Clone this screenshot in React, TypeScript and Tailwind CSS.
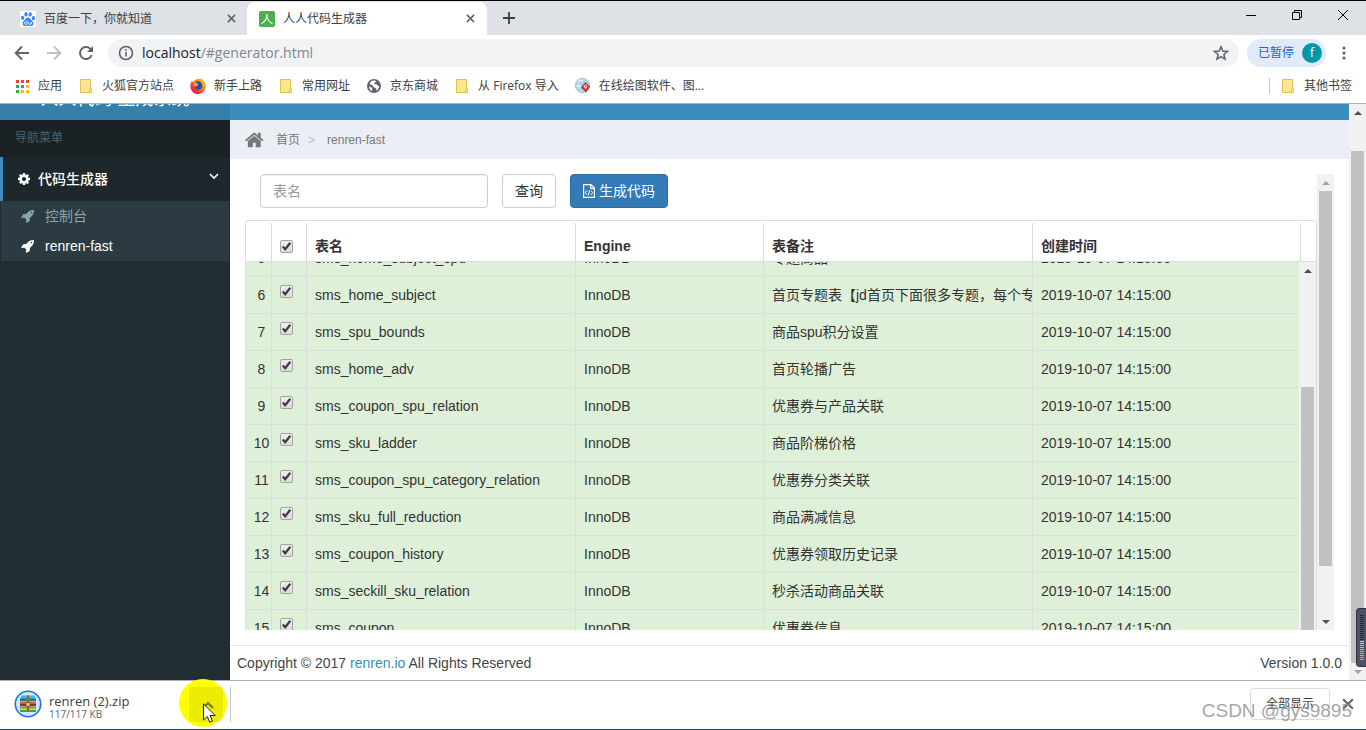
import type { ReactNode } from "react";

const UI_FONT = "font-['Open_Sans','Noto_Sans_CJK_SC',sans-serif]";
const PAGE_FONT = "font-['Liberation_Sans','Noto_Sans_CJK_SC',sans-serif]";

type Row = { id: number; name: string; comment: string };

const rows: Row[] = [
  { id: 5, name: "sms_home_subject_spu", comment: "专题商品" },
  { id: 6, name: "sms_home_subject", comment: "首页专题表【jd首页下面很多专题，每个专题链接新的页面】" },
  { id: 7, name: "sms_spu_bounds", comment: "商品spu积分设置" },
  { id: 8, name: "sms_home_adv", comment: "首页轮播广告" },
  { id: 9, name: "sms_coupon_spu_relation", comment: "优惠券与产品关联" },
  { id: 10, name: "sms_sku_ladder", comment: "商品阶梯价格" },
  { id: 11, name: "sms_coupon_spu_category_relation", comment: "优惠券分类关联" },
  { id: 12, name: "sms_sku_full_reduction", comment: "商品满减信息" },
  { id: 13, name: "sms_coupon_history", comment: "优惠券领取历史记录" },
  { id: 14, name: "sms_seckill_sku_relation", comment: "秒杀活动商品关联" },
  { id: 15, name: "sms_coupon", comment: "优惠券信息" },
];

function CloseIcon({ className }: { className: string }) {
  return (
    <svg viewBox="0 0 10 10" className={className} fill="none" stroke="currentColor" strokeWidth="1.7">
      <path d="M1 1l8 8M9 1l-8 8" />
    </svg>
  );
}

function PawIcon() {
  return (
    <svg viewBox="0 0 16 16" className="size-4 shrink-0">
      <rect width="16" height="16" fill="#fff" />
      <g fill="#3385ff">
        <ellipse cx="6" cy="3.3" rx="1.6" ry="2.3" />
        <ellipse cx="10.2" cy="3.4" rx="1.6" ry="2.2" transform="rotate(10 10.2 3.4)" />
        <ellipse cx="2.7" cy="6.8" rx="1.6" ry="2.1" transform="rotate(-15 2.7 6.8)" />
        <ellipse cx="13.4" cy="7.2" rx="1.6" ry="2.1" />
        <path d="M8 6.6c1.7 0 2.3 1.6 3.4 2.6 1.2 1.1 2.4 2 2.1 3.8-.3 1.7-1.7 2.3-3.2 2-1.5-.3-3-.3-4.5 0-1.6.3-3-.4-3.2-2-.2-1.8.9-2.8 2-3.8C5.7 8.2 6.3 6.6 8 6.6z" />
      </g>
      <path d="M7 9.5v3.8H5.4c-1.5 0-1.5-2.3 0-2.3H7M8.7 11v1.6c0 .8 2.5.9 2.5 0V11v2.4" fill="none" stroke="#fff" strokeWidth=".8" />
    </svg>
  );
}

function RenIcon() {
  return (
    <svg viewBox="0 0 16 16" className="size-4 shrink-0">
      <rect width="16" height="16" rx="2" fill="#4caf50" />
      <path d="M8 3c0 4.5-1.5 7.5-5.5 9.8M8 5.5c.5 3.5 2.2 5.7 5.5 7.3" fill="none" stroke="#fff" strokeWidth="1.2" />
    </svg>
  );
}

function FolderIcon() {
  return (
    <svg viewBox="0 0 12 14" className="h-3.5 w-3 shrink-0">
      <path d="M.5.5h10v9h1v4H.5z" fill="#ffe694" stroke="#e5c04b" />
      <path d="M9.5 13.5V10h1" fill="none" stroke="#e5c04b" />
    </svg>
  );
}

function AppsIcon() {
  const colors = ["#ea4335", "#ea4335", "#ea4335", "#34a853", "#4285f4", "#fbbc05", "#34a853", "#fbbc05", "#fbbc05"];
  return (
    <svg viewBox="0 0 13 13" className="size-[13px] shrink-0">
      {colors.map((c, i) => (
        <rect key={i} x={(i % 3) * 5} y={Math.floor(i / 3) * 5} width="3" height="3" fill={c} />
      ))}
    </svg>
  );
}

function FirefoxIcon() {
  return (
    <svg viewBox="0 0 16 16" className="size-4 shrink-0">
      <defs>
        <linearGradient id="fox" x1="1" y1="0" x2="0.1" y2="1">
          <stop offset="0" stopColor="#ffe226" />
          <stop offset=".45" stopColor="#ff7c18" />
          <stop offset=".8" stopColor="#f4243c" />
          <stop offset="1" stopColor="#e31587" />
        </linearGradient>
      </defs>
      <path d="M2 2.5c.2 1 .6 1.5 1.2 1.7C4 2.5 5.5 1.5 7 1c2 .2 2.5 0 3-.8 3.5 1.3 5.7 4.5 5.7 8A7.7 7.7 0 0 1 .3 8.5C.3 6 1 4.2 2 2.5z" fill="url(#fox)" />
      <path d="M5.5 4.500c1-1.300 3.500-1.600 4.800-.4 1.600 1.200 2.200 3 1.600 4.900-.6 2-2.400 2.900-4.200 2.600-1.800-.3-3-1.600-3.100-3.100 1 .7 2 .6 3.300-.3-1.500-.3-2.800-1.600-2.400-3.700z" fill="#1d4fb8" />
      <path d="M4.300 4.500c1.200-.3 2.200.2 2.700 1 1 .1 1.500.4 1.400.9-.7.8-1.800.8-2 1.700-.9.4-1.800.1-2.400-.9z" fill="#ffb02e" />
    </svg>
  );
}

function GlobeIcon() {
  return (
    <svg viewBox="0 0 14 14" className="size-3.5 shrink-0">
      <circle cx="7" cy="7" r="7" fill="#5f6368" />
      <path d="M5.200 1.800c1.300-.6 3-.5 4.200.2L7.800 3.800c-.8.3-.8 1.200.1 1.400l2 .3c.7.3.6 1.200 1.300 1.600l1 .1c-.1 2-1.300 3.800-3 4.600.5-1.500.2-2.400-1-2.800-1.200-.3-2-.9-2.400-1.900l-.8-1.300-2.300-.6C3 3.700 4 2.400 5.200 1.800z" fill="#fff" />
      <path d="M2 7.400l2.600 1.200c.9.5.8 1.300.3 1.800l.3 1.700C3.400 11.300 2.100 9.600 2 7.400z" fill="#fff" />
    </svg>
  );
}

function DrawIcon() {
  return (
    <svg viewBox="0 0 16 16" className="size-4 shrink-0">
      <circle cx="7.5" cy="7.5" r="7.2" fill="#a9d7ee" stroke="#8aa9b8" strokeWidth=".6" />
      <path d="M3 4c2-2 4-2 5-1M2 8c2-1 3 0 4 2" stroke="#e4f6fd" strokeWidth="1.5" fill="none" />
      <path d="M10.500 4l4.500 4.500-4 6-5.300-5z" fill="#d9303a" />
      <path d="M10.500 6.500l2 2-2 2.500-2-2.500z" fill="#fff" />
      <circle cx="10.5" cy="8.6" r=".8" fill="#d9303a" />
    </svg>
  );
}

function FileCodeIcon() {
  return (
    <svg viewBox="0 0 12 14" className="h-3.5 w-3 shrink-0" fill="none" stroke="currentColor">
      <path d="M.6.6h7.400l3.400 3.400v9.400H.6z" strokeWidth="1.2" />
      <path d="M7.700.6v3.700h3.700" strokeWidth="1.2" />
      <path d="M4 6.500L2.400 8.700 4 10.900M8 6.500l1.600 2.200L8 10.900M6.600 6.300l-1.200 4.900" />
    </svg>
  );
}

function FaGlyph({ d, className }: { d: string; className: string }) {
  return (
    <svg viewBox="0 0 1792 1792" className={className} fill="currentColor">
      <path d={d} />
    </svg>
  );
}

const HOME =
  "M1408 992v480q0 26-19 45t-45 19h-384v-384h-256v384h-384q-26 0-45-19t-19-45v-480q0-1 .5-3t.5-3l575-474 575 474q1 2 1 6zm223-69l-62 74q-8 9-21 11h-3q-13 0-21-7l-692-577-692 577q-12 8-24 7-13-2-21-11l-62-74q-8-10-7-23.5t11-21.5l719-599q32-26 76-26t76 26l244 204v-195q0-14 9-23t23-9h192q14 0 23 9t9 23v408l219 182q10 8 11 21.5t-7 23.5z";
const ROCKET =
  "M1440 448q0-40-28-68t-68-28-68 28-28 68 28 68 68 28 68-28 28-68zm224-288q0 249-75.5 430.5t-253.5 360.5q-81 80-195 176l-20 379q-2 16-16 26l-384 224q-7 4-16 4-12 0-23-9l-64-64q-13-14-8-32l85-276-281-281-276 85q-3 1-9 1-14 0-23-9l-64-64q-17-19-5-39l224-384q10-14 26-16l379-20q96-114 176-195 188-187 358-258t431-71q14 0 24 9.5t10 22.5z";
const COG =
  "M1152 896q0-106-75-181t-181-75-181 75-75 181 75 181 181 75 181-75 75-181zm512-109v222q0 12-8 23t-20 13l-185 28q-19 54-39 91 35 50 107 138 10 12 10 25t-9 23q-27 37-99 108t-94 71q-12 0-26-9l-138-108q-44 23-91 38-16 136-29 186-7 28-36 28h-222q-14 0-24.5-8.5t-11.5-21.5l-28-184q-49-16-90-37l-141 107q-10 9-25 9-14 0-25-11-126-114-165-168-7-10-7-23 0-12 8-23 15-21 51-66.5t54-70.5q-27-50-41-99l-183-27q-13-2-21-12.5t-8-23.5v-222q0-12 8-23t19-13l186-28q14-46 39-92-40-57-107-138-10-12-10-24 0-10 9-23 26-36 98.5-107.5t94.5-71.5q13 0 26 10l138 107q44-23 91-38 16-136 29-186 7-28 36-28h222q14 0 24.5 8.5t11.5 21.5l28 184q49 16 90 37l142-107q9-9 24-9 13 0 25 10 129 119 165 170 7 8 7 22 0 12-8 23-15 21-51 66.5t-54 70.5q26 50 41 98l183 28q13 2 21 12.5t8 23.5z";

function Arrow({ down, faded }: { down?: boolean; faded?: boolean }) {
  return (
    <div className={`flex h-[17px] shrink-0 items-center justify-center ${faded ? "text-[#a3a3a3]" : "text-[#505050]"}`}>
      <svg viewBox="0 0 8 4" className="h-1 w-2" fill="currentColor">
        <path d={down ? "M0 0h8L4 4z" : "M0 4h8L4 0z"} />
      </svg>
    </div>
  );
}

function Bookmark({ icon, children }: { icon: ReactNode; children: ReactNode }) {
  return (
    <a href="#" className="flex items-center gap-2 whitespace-nowrap">
      <span className="flex w-4 justify-center">{icon}</span>
      {children}
    </a>
  );
}

function Check({ label }: { label: string }) {
  return (
    <span className="grid size-[13px]">
      <input
        type="checkbox"
        defaultChecked
        aria-label={label}
        className="peer col-start-1 row-start-1 size-[13px] appearance-none rounded-xs border border-[#a3a3a3] bg-linear-to-b from-[#eeeeee] to-[#dcdcdc]"
      />
      <svg viewBox="0 0 13 13" className="pointer-events-none invisible col-start-1 row-start-1 size-[13px] peer-checked:visible" fill="none" stroke="#3c3c3c" strokeWidth="2.2">
        <path d="M2.800 6.500l2.400 2.700L10.300 2.800" />
      </svg>
    </span>
  );
}

function Columns() {
  return (
    <colgroup>
      <col className="w-[26px]" />
      <col className="w-[35px]" />
      <col className="w-[269px]" />
      <col className="w-[188px]" />
      <col className="w-[269px]" />
      <col />
    </colgroup>
  );
}

function BrowserChrome() {
  return (
    <header className={`shrink-0 text-xs text-[#3c4043] ${UI_FONT}`}>
      <div className="flex h-[35px] items-stretch border-t border-black bg-[#dee1e6]">
        <div className="mt-px flex w-[247px] items-center pr-[11px] pl-5">
          <PawIcon />
          <span className="ml-2 flex-1">百度一下，你就知道</span>
          <button aria-label="关闭标签页" className="text-[#5f6368]">
            <CloseIcon className="size-[9px]" />
          </button>
        </div>
        <div className="mt-px flex w-60 items-center rounded-t-lg bg-white px-3">
          <RenIcon />
          <span className="ml-2 flex-1">人人代码生成器</span>
          <button aria-label="关闭标签页" className="text-[#5f6368]">
            <CloseIcon className="size-[9px]" />
          </button>
        </div>
        <button aria-label="新标签页" className="ml-4 text-[#3c4043]">
          <svg viewBox="0 0 12 12" className="size-3" stroke="currentColor" strokeWidth="1.8">
            <path d="M6 0v12M0 6h12" />
          </svg>
        </button>
        <div className="ml-auto flex items-center gap-9 pr-[18px] pb-1.5 text-black">
          <button aria-label="最小化">
            <svg viewBox="0 0 10 10" className="size-2.5" stroke="currentColor"><path d="M0 5.5h10" /></svg>
          </button>
          <button aria-label="还原">
            <svg viewBox="0 0 10 10" className="size-2.5" stroke="currentColor" fill="none"><path d="M.5 2.5h7v7h-7zM2.5 2.5v-2h7v7h-2" /></svg>
          </button>
          <button aria-label="关闭">
            <svg viewBox="0 0 10 10" className="size-2.5" stroke="currentColor"><path d="M0 0l10 10M10 0L0 10" /></svg>
          </button>
        </div>
      </div>

      <div className="flex h-9 items-center bg-white pr-5 pl-3.5">
        <div className="flex gap-4 text-[#5f6368]">
          <button aria-label="后退">
            <svg viewBox="0 0 16 16" className="size-4" stroke="currentColor" strokeWidth="1.9" fill="none"><path d="M15 8H2M8 1.500L1.700 8 8 14.500" /></svg>
          </button>
          <button aria-label="前进" className="text-[#bfc1c3]">
            <svg viewBox="0 0 16 16" className="size-4" stroke="currentColor" strokeWidth="1.9" fill="none"><path d="M1 8h13M8 1.500L14.300 8 8 14.500" /></svg>
          </button>
          <button aria-label="重新加载">
            <svg viewBox="0 0 16 16" className="size-4" fill="none"><path d="M13.700 10a6 6 0 1 1-1.500-6.300L14 5.500" stroke="currentColor" strokeWidth="1.9" /><path d="M15 1v6H9z" fill="currentColor" /></svg>
          </button>
        </div>
        <div className="ml-3.5 flex h-7 flex-1 items-center rounded-full bg-[#f1f3f4] px-2.5 text-[#5f6368]">
          <svg viewBox="0 0 16 16" className="size-4 shrink-0" fill="none" stroke="currentColor" strokeWidth="1.6">
            <circle cx="8" cy="8" r="6.5" />
            <path d="M8 7v4.500M8 4.300v1.600" />
          </svg>
          <button className="ml-2 flex-1 text-left text-sm text-[#80868b]">
            <span className="text-[#202124]">localhost</span>/#generator.html
          </button>
          <button aria-label="收藏">
            <svg viewBox="0 0 16 16" className="size-4" fill="none" stroke="currentColor" strokeWidth="1.5"><path d="M8 1.800l1.800 4.300 4.700.4-3.600 3 1.100 4.600L8 11.700l-4 2.400 1.100-4.600-3.600-3 4.700-.4z" /></svg>
          </button>
        </div>
        <button className="ml-2 flex h-7 items-center gap-2 rounded-full bg-[#e1eaf9] pr-1 pl-[11px] text-[#1a66d2]">
          已暂停
          <span className="flex size-5 items-center justify-center rounded-full bg-[#0097a7] text-white">f</span>
        </button>
        <button aria-label="菜单" className="ml-4 text-[#5f6368]">
          <svg viewBox="0 0 4 14" className="h-3.5 w-1" fill="currentColor"><circle cx="2" cy="2" r="1.6" /><circle cx="2" cy="7" r="1.6" /><circle cx="2" cy="12" r="1.6" /></svg>
        </button>
      </div>

      <nav className="flex h-[33px] items-center gap-4 border-b border-[#b6b4b6] bg-white pr-3.5 pb-0.5 pl-3.5">
        <Bookmark icon={<AppsIcon />}>应用</Bookmark>
        <Bookmark icon={<FolderIcon />}>火狐官方站点</Bookmark>
        <Bookmark icon={<FirefoxIcon />}>新手上路</Bookmark>
        <Bookmark icon={<FolderIcon />}>常用网址</Bookmark>
        <Bookmark icon={<GlobeIcon />}>京东商城</Bookmark>
        <Bookmark icon={<FolderIcon />}>从 Firefox 导入</Bookmark>
        <Bookmark icon={<DrawIcon />}>在线绘图软件、图...</Bookmark>
        <div className="ml-auto flex items-center gap-2.5">
          <span className="h-4 w-px bg-[#c8cacd]" />
          <Bookmark icon={<FolderIcon />}>其他书签</Bookmark>
        </div>
      </nav>
    </header>
  );
}

function Sidebar() {
  return (
    <aside className="flex w-[230px] shrink-0 flex-col bg-[#222d32]">
      <div className="flex h-4 items-end justify-center overflow-hidden bg-[#367fa9]">
        <span className="h-[35px] text-lg leading-7 text-white">人人代码 生成系统</span>
      </div>
      <div className="flex h-[37px] items-center bg-[#1a2226] px-[15px] pb-0.5 text-xs text-[#4b646f]">导航菜单</div>
      <button className="flex h-11 items-center border-l-3 border-[#3c8dbc] bg-[#1e282c] pr-[11px] pl-3.5 text-sm text-white">
        <FaGlyph d={COG} className="size-3.5" />
        <span className="ml-[7px] flex-1 text-left font-medium">代码生成器</span>
        <svg viewBox="0 0 10 10" className="mb-1.5 size-2.5" fill="none" stroke="currentColor" strokeWidth="1.6"><path d="M1 3l4 4 4-4" /></svg>
      </button>
      <nav className="mx-px bg-[#2c3b41] text-sm text-[#8aa4af]">
        <a href="#" className="flex h-[30px] items-center gap-2.5 pl-5">
          <FaGlyph d={ROCKET} className="size-3.5" />
          控制台
        </a>
        <a href="#" className="flex h-[30px] items-center gap-2.5 pl-5 text-white">
          <FaGlyph d={ROCKET} className="size-3.5" />
          renren-fast
        </a>
      </nav>
    </aside>
  );
}

function DataGrid() {
  const head = "border-r border-[#ddd] px-2 pt-2 text-left font-bold";
  const cell = "overflow-hidden border-r border-b border-[#ddd] px-2 whitespace-nowrap";
  return (
    <div className="flex min-h-0 flex-1 flex-col rounded-t-sm border border-b-0 border-[#ddd] text-sm text-[#333]">
      <div className="shrink-0 border-b border-[#ddd] pt-0.5 pr-[15px]">
        <table className="h-[38px] w-full table-fixed border-separate border-spacing-0">
          <Columns />
          <thead>
            <tr>
              <th className={head} aria-label="序号" />
              <th className={head}><Check label="全选" /></th>
              <th className={head}>表名</th>
              <th className={head}>Engine</th>
              <th className={head}>表备注</th>
              <th className={head}>创建时间</th>
            </tr>
          </thead>
        </table>
      </div>
      <div className="flex min-h-0 flex-1 overflow-hidden">
        <div className="min-w-0 flex-1 overflow-hidden">
          <table className="-mt-[22px] w-full table-fixed border-separate border-spacing-0 bg-[#dff0d8]">
            <Columns />
            <tbody>
              {rows.map((r) => (
                <tr key={r.id} className="h-[37px]">
                  <td className="border-r border-b border-[#ddd] pl-1.5 text-center">{r.id}</td>
                  <td className={`${cell} pb-2`}><Check label={r.name} /></td>
                  <td className={cell}>{r.name}</td>
                  <td className={cell}>InnoDB</td>
                  <td className={cell}>{r.comment}</td>
                  <td className="border-b border-[#ddd] px-2">2019-10-07 14:15:00</td>
                </tr>
              ))}
            </tbody>
          </table>
        </div>
        <div className="flex w-[17px] shrink-0 flex-col bg-[#f1f1f1]">
          <Arrow />
          <div className="mx-0.5 mt-[108px] flex-1 bg-[#c1c1c1]" />
        </div>
      </div>
    </div>
  );
}

function Page() {
  return (
    <div className={`relative flex min-h-0 flex-1 ${PAGE_FONT}`}>
      <Sidebar />
      <main className="flex min-w-0 flex-1 flex-col bg-white">
        <div className="h-4 shrink-0 bg-[#3c8dbc]" />
        <nav className="flex h-[39px] shrink-0 items-center bg-[#ebeef4] pl-[15px] text-xs text-[#777]">
          <FaGlyph d={HOME} className="size-5" />
          <a href="#" className="ml-[11px]">首页</a>
          <span className="mr-3 ml-2 text-[#bbb]">&gt;</span>
          <span>renren-fast</span>
        </nav>
        <div className="flex min-h-0 flex-1 p-[15px]">
          <section className="flex min-w-0 flex-1 flex-col">
            <div className="mb-3 flex shrink-0 gap-3.5 pl-[15px] text-sm">
              <input
                type="text"
                aria-label="表名"
                placeholder="表名"
                className="h-[34px] w-[228px] rounded-sm border border-[#ccc] px-3 inset-shadow-2xs placeholder:text-[#999]"
              />
              <button className="h-[34px] rounded-sm border border-[#ccc] bg-white px-3 text-[#333]">查询</button>
              <button className="flex h-[34px] items-center gap-1 rounded-sm border border-[#2e6da4] bg-[#337ab7] px-3 text-white">
                <FileCodeIcon />
                生成代码
              </button>
            </div>
            <DataGrid />
          </section>
          <div className="flex w-[17px] shrink-0 flex-col bg-[#f1f1f1]">
            <Arrow faded />
            <div className="mx-0.5 mb-[47px] flex-1 bg-[#c1c1c1]" />
            <Arrow down />
          </div>
        </div>
        <footer className="flex h-[35px] shrink-0 items-center justify-between border-t border-[#e7e7e7] px-[7px] text-sm text-[#444]">
          <p>
            Copyright © 2017 <a href="#" className="text-[#3c8dbc]">renren.io</a> All Rights Reserved
          </p>
          <p>Version 1.0.0</p>
        </footer>
      </main>
      <div className="flex w-[17px] shrink-0 flex-col bg-[#f1f1f1]">
        <Arrow />
        <div className="mx-0.5 mt-[30px] flex-1 bg-[#c1c1c1]" />
        <Arrow down faded />
      </div>
      <div className="absolute right-0 bottom-[13px] flex h-[59px] w-2.5 flex-col justify-center gap-px rounded-l-sm border border-r-0 border-[#2e3342] bg-[#4d5262] pl-[3px]">
        {Array.from({ length: 23 }, (_, i) => (
          <span key={i} className={`h-px w-1 ${i < 13 ? "bg-[#23283a]" : i < 15 ? "bg-[#d5dc8b]" : i < 19 ? "bg-[#94d49b]" : "bg-[#63d0c0]"}`} />
        ))}
      </div>
    </div>
  );
}

function ArchiveIcon() {
  return (
    <svg viewBox="0 0 28 28" className="size-7 shrink-0">
      <circle cx="14" cy="14" r="12.7" fill="#d5e5fb" stroke="#1a73e8" strokeWidth="1.6" />
      <path d="M7.500 5.500h13l1.500 5H6z" fill="#45b4e4" />
      <path d="M6 8.500h16V11H6z" fill="#1475a8" />
      <path d="M6 11.500h16V16H6z" fill="#d2603a" />
      <path d="M6 14h16v2H6z" fill="#8f2f1c" />
      <path d="M6 16.500h16V22H6z" fill="#4da32f" />
      <path d="M6 18.500h16v1.200H6z" fill="#e4eecb" />
      <path d="M12.500 5.500h3V22h-3z" fill="#b98436" />
      <path d="M13.600 5.500h.8V22h-.8z" fill="#5f4319" />
      <rect x="12" y="12.5" width="4" height="3.5" fill="#f0cf7a" stroke="#6b4a1c" strokeWidth=".7" />
    </svg>
  );
}

function DownloadBar() {
  return (
    <div className={`relative flex h-[50px] shrink-0 items-center border-t border-b border-t-[#b0adb0] border-b-[#26495c] bg-white pb-0.5 text-xs text-[#3c4043] ${UI_FONT}`}>
      <div className="relative flex h-9 w-[231px] items-center border-r border-[#c8c8c8] pl-3.5">
        <ArchiveIcon />
        <div className="ml-[7px] flex-1 pt-1.5">
          <p className="text-[13px] leading-[14px]">renren (2).zip</p>
          <p className="text-[10px] leading-3 text-[#5f6368]">117/117 KB</p>
        </div>
        <button aria-label="更多操作" className="mr-1.5 h-9 w-8 rounded-sm bg-[#eeeeee]" />
        <svg viewBox="0 0 50 50" className="pointer-events-none absolute -top-2 right-0.5 size-[50px]">
          <clipPath id="spot"><circle cx="25" cy="25" r="24" /></clipPath>
          <circle cx="25" cy="25" r="24" fill="#ffff00" />
          <rect x="11" y="9" width="34" height="35" rx="3" fill="#ecec00" clipPath="url(#spot)" />
          <path d="M25 30l5-5 5 5" fill="none" stroke="#77770a" strokeWidth="2" />
          <path d="M25.500 26v16l3.800-3.500 2.500 5.800 2.700-1.200-2.500-5.600h5.300z" fill="#fff" stroke="#222" />
        </svg>
      </div>
      <div className="ml-auto flex items-center gap-3 pr-3">
        <button className="h-8 w-20 rounded-sm border border-[#dadce0]">全部显示</button>
        <button aria-label="关闭下载栏" className="text-[#5f6368]">
          <CloseIcon className="size-3" />
        </button>
      </div>
      <span className="pointer-events-none absolute right-3.5 bottom-1.5 font-['Liberation_Sans',sans-serif] text-[19px] text-[#8c8c8c]/80">CSDN @gys9895</span>
    </div>
  );
}

export default function App() {
  return (
    <div className="flex h-screen flex-col overflow-hidden bg-white">
      <BrowserChrome />
      <Page />
      <DownloadBar />
    </div>
  );
}
